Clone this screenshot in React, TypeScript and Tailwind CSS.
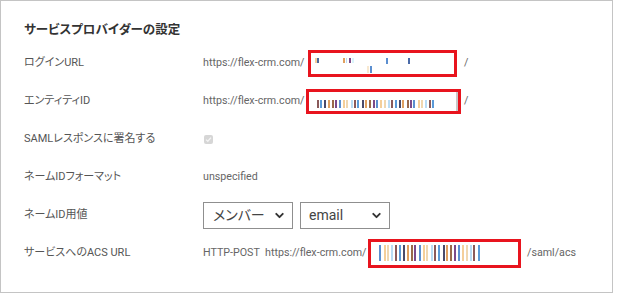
import { ChevronDown } from 'lucide-react';

const font = "font-['Roboto','Noto_Sans_CJK_JP',sans-serif] [font-feature-settings:'palt']";

type Mark = [string, number, number, number?, number?]; // color, x, width, top, height

function Marks({ marks, h }: { marks: Mark[]; h: number }) {
    return (
        <div className="relative w-full" style={{ height: h }}>
            {marks.map((m, i) => (
                <span
                    key={i}
                    className="absolute"
                    style={{ left: m[1], width: m[2], top: m[3] ?? 0, height: m[4] ?? h, background: m[0] }}
                />
            ))}
        </div>
    );
}

const palette = ['#f5cf9a', '#8a5a5a', '#e0a060', '#5b8fd0', '#b9dcf5', '#4a4a6a', '#7c4a8a', '#f0d7b0', '#5a9ad8', '#9a6a4a'];

function stripes(count: number, step: number, seed: number, h: number): Mark[] {
    const out: Mark[] = [];
    let x = 0;
    for (let i = 0; i < count; i++) {
        const c = palette[(i * 7 + seed) % palette.length];
        out.push([c, x, 2, 0, h]);
        x += step + ((i + seed) % 3 === 0 ? 1 : 0);
    }
    return out;
}

function RedBox({ w, h, children }: { w: number; h: number; children: React.ReactNode }) {
    return (
        <div className="border-[3px] border-[#e8141e] bg-white box-border shrink-0" style={{ width: w, height: h }}>
            {children}
        </div>
    );
}

function Row({ label, children }: { label: string; children: React.ReactNode }) {
    return (
        <div className="flex items-center h-[38px]">
            <div className="w-[179px] shrink-0 text-[11px] text-[#555] whitespace-nowrap">{label}</div>
            <div className="flex items-center text-[10.7px] text-[#666] whitespace-nowrap">{children}</div>
        </div>
    );
}

function FakeSelect({ value, w, big }: { value: string; w: number; big?: boolean }) {
    return (
        <div
            className="h-[27px] border border-[#8f8f8f] bg-white flex items-center justify-between pl-[8px] pr-[6px] box-border"
            style={{ width: w }}
        >
            <span className={big ? 'text-[14px] text-[#444] pl-[1px]' : 'text-[14px] text-[#444]'}>{value}</span>
            <ChevronDown size={13} strokeWidth={3.5} className="text-[#333]" />
        </div>
    );
}

export default function App() {
    return (
        <div className={`w-[619px] h-[303px] bg-white ${font}`}>
            <div className="w-[613px] h-[293px] border border-[#c4c4c4] box-border pl-[23px] pt-[19px]">
                <div className="text-[12.5px] font-bold text-[#333] h-[24px] leading-[19px]">サービスプロバイダーの設定</div>

                <Row label="ログインURL">
                    <span className="w-[105px]">https://flex-crm.com/</span>
                    <RedBox w={149} h={27}>
                        <div className="pt-[5px] px-[4px]">
                            <Marks
                                h={16}
                                marks={[
                                    ['#f5cf9a', 0, 2, 0, 5],
                                    ['#4a6aa0', 2, 2, 0, 5],
                                    ['#e0a060', 28, 2, 0, 5],
                                    ['#b9dcf5', 31, 1, 0, 5],
                                    ['#7c4a8a', 34, 2, 0, 5],
                                    ['#d9f4fb', 37, 2, 0, 5],
                                    ['#f8e8d0', 52, 2, 8, 7],
                                    ['#5b8fd0', 55, 2, 8, 7],
                                    ['#5b8fd0', 71, 2, 0, 6],
                                    ['#4a6aa8', 93, 2, 0, 6],
                                ]}
                            />
                        </div>
                    </RedBox>
                    <span className="ml-[7px]">/</span>
                </Row>

                <Row label="エンティティID">
                    <span className="w-[103px]">https://flex-crm.com/</span>
                    <RedBox w={155} h={25}>
                        <div className="h-full border-r-2 border-[#c8c8c8] pt-[8px] pl-[8px]">
                            <Marks h={8} marks={stripes(32, 3.4, 1, 8)} />
                        </div>
                    </RedBox>
                    <span className="ml-[3px]">/</span>
                </Row>

                <Row label="SAMLレスポンスに署名する">
                    <div className="w-[9px] h-[9px] ml-[1px] rounded-[2px] bg-[#d6d6d6] flex items-center justify-center">
                        <svg width="7" height="7" viewBox="0 0 7 7">
                            <path d="M1 3.6 L2.8 5.3 L6 1.6" stroke="#f4f4f4" strokeWidth="1.3" fill="none" />
                        </svg>
                    </div>
                </Row>

                <Row label="ネームIDフォーマット">
                    <span>unspecified</span>
                </Row>

                <Row label="ネームID用値">
                    <div className="flex gap-[7px]">
                        <FakeSelect value="メンバー" w={90} big />
                        <FakeSelect value="email" w={90} />
                    </div>
                </Row>

                <Row label="サービスへのACS URL">
                    <span className="w-[62px]">HTTP-POST</span>
                    <span className="w-[103px]">https://flex-crm.com/</span>
                    <RedBox w={153} h={29}>
                        <div className="pt-[3px] pl-[8px]">
                            <Marks h={16} marks={stripes(26, 3.6, 3, 16)} />
                        </div>
                    </RedBox>
                    <span className="ml-[6px]">/saml/acs</span>
                </Row>
            </div>
        </div>
    );
}
